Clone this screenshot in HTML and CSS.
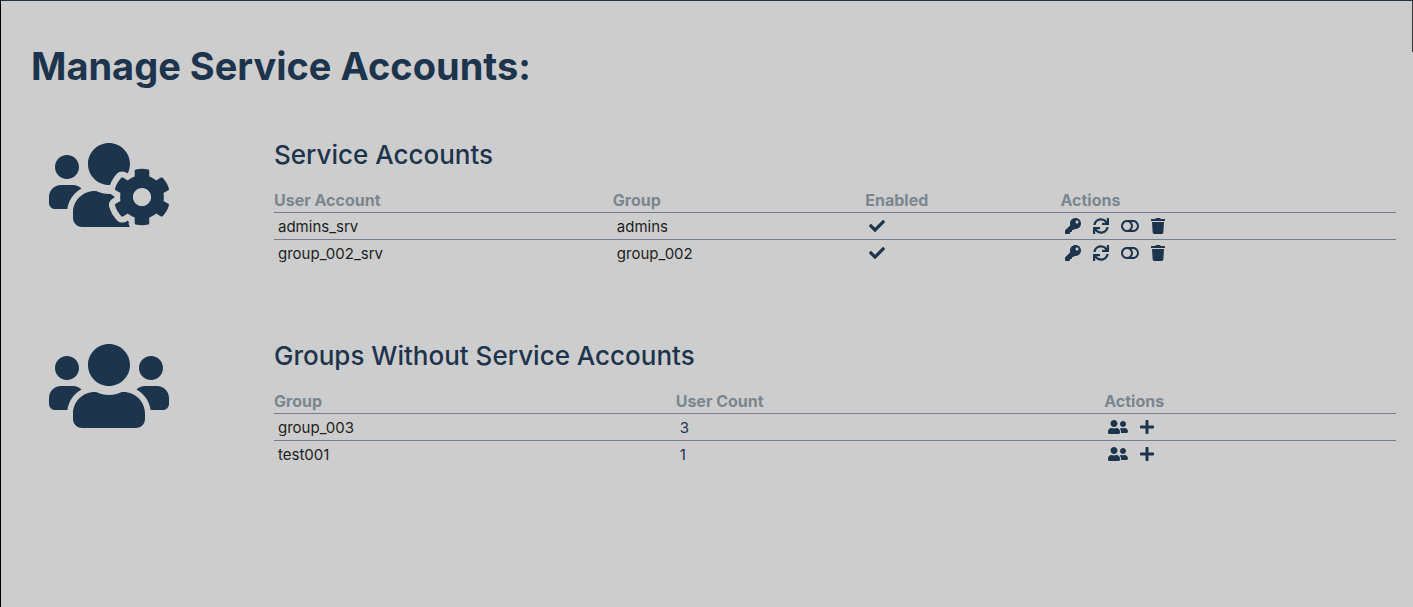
FILE: index.html
```html
<!DOCTYPE html>
<html lang="en">
<head>
<meta charset="utf-8">
<title>Manage Service Accounts</title>
<link rel="stylesheet" href="styles.css">
</head>
<body>
<svg class="sprite" aria-hidden="true">
  <symbol id="users-cog" viewBox="0 0 640 512"><path d="M610.5 341.3c2.6-14.1 2.6-28.5 0-42.6l25.8-14.9c3-1.7 4.3-5.2 3.3-8.5-6.7-21.6-18.2-41.2-33.2-57.4-2.3-2.5-6-3.1-9-1.4l-25.8 14.9c-10.9-9.3-23.4-16.5-36.9-21.3v-29.8c0-3.4-2.4-6.4-5.7-7.1-22.3-5-45-4.8-66.2 0-3.3.7-5.7 3.7-5.7 7.1v29.8c-13.5 4.8-26 12-36.9 21.3l-25.8-14.9c-2.9-1.7-6.7-1.1-9 1.4-15 16.2-26.5 35.8-33.2 57.4-1 3.3.4 6.8 3.3 8.5l25.8 14.9c-2.6 14.1-2.6 28.5 0 42.6l-25.8 14.9c-3 1.7-4.3 5.2-3.3 8.5 6.7 21.6 18.2 41.1 33.2 57.4 2.3 2.5 6 3.1 9 1.4l25.8-14.9c10.9 9.3 23.4 16.5 36.9 21.3v29.8c0 3.4 2.4 6.4 5.7 7.1 22.3 5 45 4.8 66.2 0 3.3-.7 5.7-3.7 5.7-7.1v-29.8c13.5-4.8 26-12 36.9-21.3l25.8 14.9c2.9 1.7 6.7 1.1 9-1.4 15-16.2 26.5-35.8 33.2-57.4 1-3.3-.4-6.8-3.3-8.5l-25.8-14.9zM496 368.5c-26.8 0-48.5-21.8-48.5-48.5s21.8-48.5 48.5-48.5 48.5 21.8 48.5 48.5-21.7 48.5-48.5 48.5zM96 224c35.3 0 64-28.7 64-64s-28.7-64-64-64-64 28.7-64 64 28.7 64 64 64zm224 32c1.9 0 3.7-.5 5.6-.6 8.3-21.7 20.5-42.1 36.3-59.2 7.4-8 17.9-12.6 28.9-12.6 6.9 0 13.7 1.8 19.6 5.3l7.9 4.6c.8-.5 1.6-.9 2.4-1.4 7-14.6 11.2-30.8 11.2-48 0-61.9-50.1-112-112-112S208 82.1 208 144c0 61.9 50.1 112 112 112zm105.2 194.5c-2.3-1.2-4.6-2.6-6.8-3.9-8.2 4.8-15.3 9.8-27.5 9.8-10.9 0-21.4-4.6-28.9-12.6-18.3-19.8-32.3-43.9-40.2-69.6-10.7-34.5 24.9-49.7 25.8-50.3-.1-2.6-.1-5.2 0-7.8l-7.9-4.6c-3.8-2.2-7-5-9.8-8.1-3.3.2-6.5.6-9.8.6-24.6 0-47.6-6-68.5-16h-8.3C179.6 288 128 339.6 128 403.2V432c0 26.5 21.5 48 48 48h255.4c-3.7-6-6.2-12.8-6.2-20.3v-9.2zM173.1 274.6C161.5 263.1 145.6 256 128 256H64c-35.3 0-64 28.7-64 64v32c0 17.7 14.3 32 32 32h65.9c6.3-47.4 34.9-87.3 75.2-109.4z"/></symbol>
  <symbol id="users" viewBox="0 0 640 512"><path d="M96 224c35.3 0 64-28.7 64-64s-28.7-64-64-64-64 28.7-64 64 28.7 64 64 64zm448 0c35.3 0 64-28.7 64-64s-28.7-64-64-64-64 28.7-64 64 28.7 64 64 64zm32 32h-64c-17.6 0-33.5 7.1-45.1 18.6 40.3 22.1 68.9 62 75.1 109.4h66c17.7 0 32-14.3 32-32v-32c0-35.3-28.7-64-64-64zm-256 0c61.9 0 112-50.1 112-112S381.9 32 320 32 208 82.1 208 144s50.1 112 112 112zm76.8 32h-8.3c-20.8 10-43.9 16-68.5 16s-47.6-6-68.5-16h-8.3C179.6 288 128 339.6 128 403.2V432c0 26.5 21.5 48 48 48h288c26.5 0 48-21.5 48-48v-28.8c0-63.6-51.6-115.2-115.2-115.2zm-223.7-13.4C161.5 263.1 145.6 256 128 256H64c-35.3 0-64 28.7-64 64v32c0 17.7 14.3 32 32 32h65.9c6.3-47.4 34.9-87.3 75.2-109.4z"/></symbol>
  <symbol id="key" viewBox="0 0 512 512"><path d="M512 176.001C512 273.203 433.202 352 336 352c-11.22 0-22.19-1.062-32.827-3.069l-24.012 27.014A23.999 23.999 0 0 1 261.223 384H224v40c0 13.255-10.745 24-24 24h-40v40c0 13.255-10.745 24-24 24H24c-13.255 0-24-10.745-24-24v-78.059c0-6.365 2.529-12.47 7.029-16.971l161.802-161.802C163.108 213.814 160 195.271 160 176 160 78.798 238.797.001 335.999 0 433.488-.001 512 78.511 512 176.001zM336 128c0 26.51 21.49 48 48 48s48-21.49 48-48-21.49-48-48-48-48 21.49-48 48z"/></symbol>
  <symbol id="sync" viewBox="0 0 512 512"><path d="M440.65 12.57l4 82.77A247.16 247.16 0 0 0 255.83 8C134.73 8 33.91 94.92 12.29 209.82A12 12 0 0 0 24.09 224h49.05a12 12 0 0 0 11.67-9.26 175.91 175.91 0 0 1 317-56.94l-101.46-4.86a12 12 0 0 0-12.57 12v47.41a12 12 0 0 0 12 12H500a12 12 0 0 0 12-12V12a12 12 0 0 0-12-12h-47.37a12 12 0 0 0-11.98 12.57zM255.83 432a175.61 175.61 0 0 1-146-77.8l101.8 4.87a12 12 0 0 0 12.57-12v-47.4a12 12 0 0 0-12-12H12a12 12 0 0 0-12 12V500a12 12 0 0 0 12 12h47.35a12 12 0 0 0 12-12.6l-4.15-82.57A247.17 247.17 0 0 0 255.83 504c121.11 0 221.93-86.92 243.55-201.82a12 12 0 0 0-11.8-14.18h-49.05a12 12 0 0 0-11.67 9.26A175.86 175.86 0 0 1 255.83 432z"/></symbol>
  <symbol id="toggle" viewBox="0 0 576 512"><path d="M384 64H192C85.961 64 0 149.961 0 256s85.961 192 192 192h192c106.039 0 192-85.961 192-192S490.039 64 384 64zM64 256c0-70.741 57.249-128 128-128 70.741 0 128 57.249 128 128 0 70.741-57.249 128-128 128-70.741 0-128-57.249-128-128zm320 128h-48.905c65.217-72.858 65.236-183.12 0-256H384c70.741 0 128 57.249 128 128 0 70.74-57.249 128-128 128z"/></symbol>
  <symbol id="trash" viewBox="0 0 448 512"><path d="M432 32H312l-9.4-18.7A24 24 0 0 0 281.1 0H166.8a23.72 23.72 0 0 0-21.4 13.3L136 32H16A16 16 0 0 0 0 48v32a16 16 0 0 0 16 16h416a16 16 0 0 0 16-16V48a16 16 0 0 0-16-16zM53.2 467a48 48 0 0 0 47.9 45h245.8a48 48 0 0 0 47.9-45L416 128H32z"/></symbol>
  <symbol id="plus" viewBox="0 0 448 512"><path d="M416 208H272V64c0-17.67-14.33-32-32-32h-32c-17.67 0-32 14.33-32 32v144H32c-17.67 0-32 14.33-32 32v32c0 17.67 14.33 32 32 32h144v144c0 17.67 14.33 32 32 32h32c17.67 0 32-14.33 32-32V304h144c17.67 0 32-14.33 32-32v-32c0-17.67-14.33-32-32-32z"/></symbol>
  <symbol id="check" viewBox="0 0 512 512"><path d="M173.898 439.404l-166.4-166.4c-9.997-9.997-9.997-26.206 0-36.204l36.203-36.204c9.997-9.998 26.207-9.998 36.204 0L192 312.69 432.095 72.596c9.997-9.997 26.207-9.997 36.204 0l36.203 36.204c9.997 9.997 9.997 26.206 0 36.204l-294.4 294.401c-9.998 9.997-26.207 9.997-36.204-.001z"/></symbol>
  <symbol id="user-friends" viewBox="0 0 640 512"><path d="M192 256c61.9 0 112-50.1 112-112S253.9 32 192 32 80 82.1 80 144s50.1 112 112 112zm76.8 32h-8.3c-20.8 10-43.9 16-68.5 16s-47.6-6-68.5-16h-8.3C51.6 288 0 339.6 0 403.2V432c0 26.5 21.5 48 48 48h288c26.5 0 48-21.5 48-48v-28.8c0-63.6-51.6-115.2-115.2-115.2zM480 256c53 0 96-43 96-96s-43-96-96-96-96 43-96 96 43 96 96 96zm48 32h-3.8c-13.9 4.8-28.6 8-44.2 8s-30.3-3.2-44.2-8H432c-20.4 0-39.2 5.9-55.7 15.4 24.4 26.3 39.7 61.2 39.7 99.8v38.4c0 2.2-.5 4.3-.6 6.4H592c26.5 0 48-21.5 48-48 0-61.9-50.1-112-112-112z"/></symbol>
</svg>
<main class="page">
  <div class="edge"></div>
  <h1 class="page-title">Manage Service Accounts:</h1>

  <section class="section" aria-labelledby="accounts-title">
    <svg class="section-icon" aria-hidden="true"><use href="#users-cog"/></svg>
    <div class="section-body">
      <h2 class="section-title" id="accounts-title">Service Accounts</h2>
      <table class="table">
        <colgroup><col class="col-account"><col class="col-group"><col class="col-enabled"><col></colgroup>
        <thead>
          <tr><th>User Account</th><th>Group</th><th>Enabled</th><th>Actions</th></tr>
        </thead>
        <tbody>
          <tr>
            <td>admins_srv</td><td>admins</td>
            <td class="icon-cell"><svg class="icon" role="img" aria-label="Enabled"><use href="#check"/></svg></td>
            <td class="icon-cell"><div class="actions">
              <button class="action" type="button" aria-label="Reset key"><svg class="icon"><use href="#key"/></svg></button>
              <button class="action" type="button" aria-label="Refresh"><svg class="icon"><use href="#sync"/></svg></button>
              <button class="action" type="button" aria-label="Toggle"><svg class="icon icon-toggle"><use href="#toggle"/></svg></button>
              <button class="action" type="button" aria-label="Delete"><svg class="icon icon-narrow"><use href="#trash"/></svg></button>
            </div></td>
          </tr>
          <tr>
            <td>group_002_srv</td><td>group_002</td>
            <td class="icon-cell"><svg class="icon" role="img" aria-label="Enabled"><use href="#check"/></svg></td>
            <td class="icon-cell"><div class="actions">
              <button class="action" type="button" aria-label="Reset key"><svg class="icon"><use href="#key"/></svg></button>
              <button class="action" type="button" aria-label="Refresh"><svg class="icon"><use href="#sync"/></svg></button>
              <button class="action" type="button" aria-label="Toggle"><svg class="icon icon-toggle"><use href="#toggle"/></svg></button>
              <button class="action" type="button" aria-label="Delete"><svg class="icon icon-narrow"><use href="#trash"/></svg></button>
            </div></td>
          </tr>
        </tbody>
      </table>
    </div>
  </section>

  <section class="section" aria-labelledby="groups-title">
    <svg class="section-icon" aria-hidden="true"><use href="#users"/></svg>
    <div class="section-body">
      <h2 class="section-title" id="groups-title">Groups Without Service Accounts</h2>
      <table class="table">
        <colgroup><col class="col-name"><col class="col-count"><col></colgroup>
        <thead>
          <tr><th>Group</th><th>User Count</th><th>Actions</th></tr>
        </thead>
        <tbody>
          <tr>
            <td>group_003</td><td><a class="count" href="#">3</a></td>
            <td class="icon-cell"><div class="actions">
              <button class="action" type="button" aria-label="View users"><svg class="icon icon-wide"><use href="#user-friends"/></svg></button>
              <button class="action" type="button" aria-label="Add service account"><svg class="icon icon-narrow"><use href="#plus"/></svg></button>
            </div></td>
          </tr>
          <tr>
            <td>test001</td><td><a class="count" href="#">1</a></td>
            <td class="icon-cell"><div class="actions">
              <button class="action" type="button" aria-label="View users"><svg class="icon icon-wide"><use href="#user-friends"/></svg></button>
              <button class="action" type="button" aria-label="Add service account"><svg class="icon icon-narrow"><use href="#plus"/></svg></button>
            </div></td>
          </tr>
        </tbody>
      </table>
    </div>
  </section>
</main>
</body>
</html>
```

FILE: styles.css
```css
:root {
  --navy: #1d344d;
  --muted: #7b868f;
  --line: #74818c;
}

* {
  box-sizing: border-box;
}

body {
  margin: 0;
  background: #cdcdcd;
  color: #1c1f22;
  font: 15px/24px Inter, "Liberation Sans", sans-serif;
}

.sprite {
  display: none;
}

.page {
  position: relative;
  min-height: 100vh;
  padding: 41px 17px 0 30px;
  border-top: 1px solid var(--navy);
  border-left: 1px solid #000;
}

.edge {
  position: absolute;
  top: 0;
  right: 0;
  width: 1px;
  height: 51px;
  background: #3a3a3c;
}

.page-title {
  margin: 0;
  color: var(--navy);
  font-size: 38px;
  font-weight: 700;
  line-height: 48px;
}

.section {
  display: grid;
  grid-template-columns: 225px minmax(0, 1fr);
  gap: 18px;
  margin-top: 47px;
}

.section + .section {
  margin-top: 72px;
}

.section-icon {
  width: 120px;
  height: 96px;
  margin-left: 18px;
  fill: var(--navy);
}

.section-title {
  margin: 0 0 12px;
  color: var(--navy);
  font-size: 26px;
  font-weight: 500;
  line-height: 36px;
}

.table {
  width: 100%;
  table-layout: fixed;
  border-collapse: collapse;
}

.table th {
  height: 27px;
  padding: 4px 0 0;
  color: var(--muted);
  font-size: 16px;
  font-weight: 700;
  line-height: 20px;
  text-align: left;
}

.table td {
  height: 27px;
  padding: 2px 4px 0;
}

.table .icon-cell {
  padding: 0 4px;
}

.table tbody tr {
  border-top: 1px solid var(--line);
}

.col-account { width: 30.2%; }
.col-group { width: 22.5%; }
.col-enabled { width: 17.4%; }
.col-name { width: 35.8%; }
.col-count { width: 38.2%; }

.icon {
  display: block;
  width: 16px;
  height: 16px;
  fill: var(--navy);
}

.icon-toggle { width: 18px; }
.icon-narrow { width: 14px; }
.icon-wide { width: 20px; }

.actions {
  display: flex;
  align-items: center;
  gap: 12px;
}

.action {
  padding: 0;
  border: 0;
  background: none;
  cursor: pointer;
}

.count {
  color: var(--navy);
  text-decoration: none;
}
```
